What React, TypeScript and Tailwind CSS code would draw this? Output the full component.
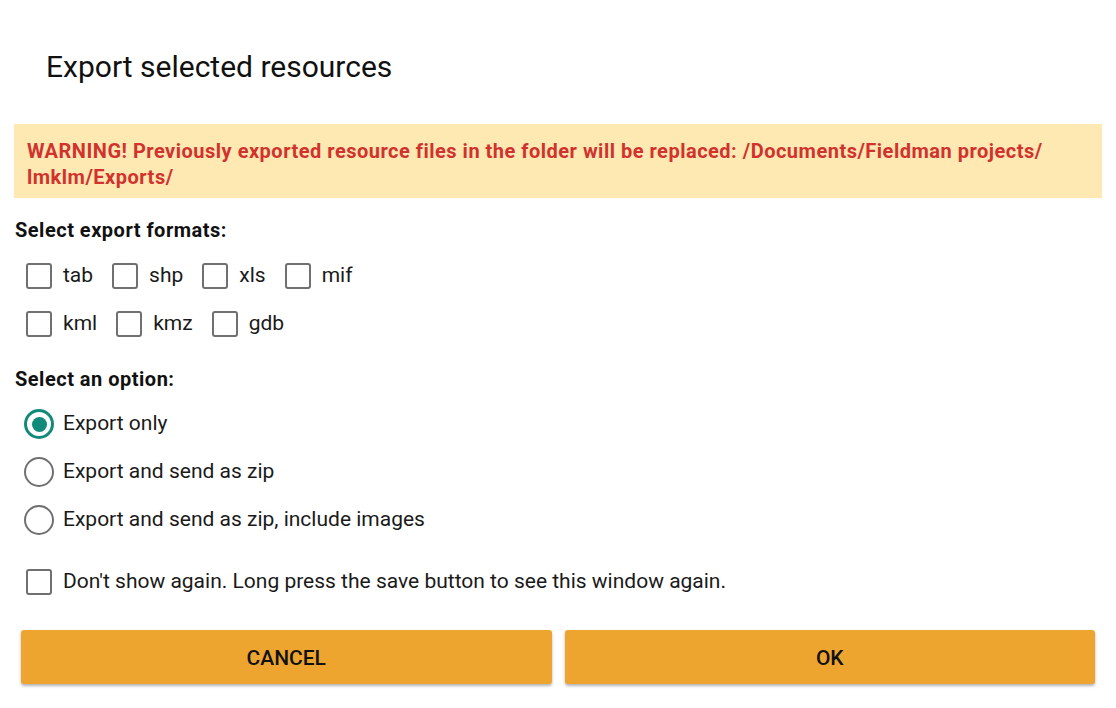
import { useState } from 'react';

const rows = [
  ['tab', 'shp', 'xls', 'mif'],
  ['kml', 'kmz', 'gdb'],
];

const options = [
  'Export only',
  'Export and send as zip',
  'Export and send as zip, include images',
];

function Box({ label }: { label?: string }) {
  return (
    <label className="flex items-center gap-[11px]">
      <span className="h-[26px] w-[26px] shrink-0 rounded-[3px] border-[2.5px] border-[#707070] bg-white" />
      {label && <span className="text-[21px] text-[#1a1a1a]">{label}</span>}
    </label>
  );
}

function Radio({ label, checked, onClick }: { label: string; checked: boolean; onClick: () => void }) {
  return (
    <button onClick={onClick} className="flex h-[48px] items-center gap-[9px] text-left">
      <span
        className={
          checked
            ? 'flex h-[30px] w-[30px] items-center justify-center rounded-full border-[3px] border-[#128a7b]'
            : 'flex h-[30px] w-[30px] items-center justify-center rounded-full border-[2.5px] border-[#707070]'
        }
      >
        {checked && <span className="h-[15px] w-[15px] rounded-full bg-[#128a7b]" />}
      </span>
      <span className="text-[21px] text-[#1a1a1a]">{label}</span>
    </button>
  );
}

export default function App() {
  const [opt, setOpt] = useState(0);

  return (
    <div className="h-[708px] w-[1116px] bg-white font-['Roboto',sans-serif]">
      <h1 className="pl-[46px] pt-[49px] text-[30px] leading-[36px] text-[#111]">Export selected resources</h1>

      {/* Warning banner */}
      <div className="mx-[14px] mt-[39px] bg-[#ffe9b3] px-[13px] pb-[8px] pt-[14px] text-[20px] font-bold leading-[26px] tracking-[0.5px] text-[#d2322d]">
        WARNING! Previously exported resource files in the folder will be replaced: /Documents/Fieldman projects/
        <br />
        lmklm/Exports/
      </div>

      <div className="px-[15px]">
        <h2 className="mt-[20px] text-[20px] font-bold leading-[24px] tracking-[0.5px] text-[#111]">Select export formats:</h2>

        <div className="mt-[10px] flex flex-col pl-[11px]">
          {rows.map((row, i) => (
            <div key={i} className="flex h-[48px] items-center gap-[19px]">
              {row.map((f) => (
                <Box key={f} label={f} />
              ))}
            </div>
          ))}
        </div>

        <h2 className="mt-[19px] text-[20px] font-bold leading-[24px] tracking-[0.5px] text-[#111]">Select an option:</h2>

        <div className="mt-[9px] flex flex-col pl-[9px]">
          {options.map((o, i) => (
            <Radio key={o} label={o} checked={opt === i} onClick={() => setOpt(i)} />
          ))}
        </div>

        <div className="mt-[14px] flex h-[48px] items-center pl-[11px]">
          <Box label="Don't show again. Long press the save button to see this window again." />
        </div>

        <div className="mt-[24px] flex gap-[13px] px-[6px]">
          <button className="h-[54px] flex-1 rounded-[3px] bg-[#eea52f] pt-[3px] text-[21px] font-medium text-[#111] shadow-[0_2px_3px_rgba(0,0,0,0.3)]">
            CANCEL
          </button>
          <button className="h-[54px] flex-1 rounded-[3px] bg-[#eea52f] pt-[3px] text-[21px] font-medium text-[#111] shadow-[0_2px_3px_rgba(0,0,0,0.3)]">
            OK
          </button>
        </div>
      </div>
    </div>
  );
}
